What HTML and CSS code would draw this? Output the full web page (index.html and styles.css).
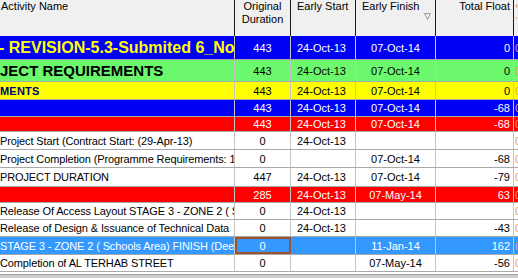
FILE: index.html
```html
<!DOCTYPE html>
<html>
<head>
<meta charset="utf-8">
<link rel="stylesheet" href="styles.css">
</head>
<body>
<div class="grid">
  <div class="row head">
    <div class="c c1">Activity Name</div>
    <div class="c c2">Original<br>Duration</div>
    <div class="c c3">Early Start</div>
    <div class="c c4"><span>Early Finish</span><svg class="sort" width="7" height="7" viewBox="0 0 7 7"><path d="M0.5 0.5 H6.5 L3.5 6.5 Z" fill="none" stroke="#9a9a9a" stroke-width="1"/></svg></div>
    <div class="c c5">Total Float</div>
    <div class="c c6"><svg width="4" height="36" viewBox="0 0 4 36"><rect x="1" y="0" width="2" height="4" fill="#e8a050"/><rect x="1" y="17" width="2" height="2" fill="#e8a050"/></svg></div>
  </div>

  <div class="row h24 blue">
    <div class="c c1"><span class="name t-wbs1">- REVISION-5.3-Submited 6_Nov</span></div>
    <div class="c c2">443</div>
    <div class="c c3">24-Oct-13</div>
    <div class="c c4">07-Oct-14</div>
    <div class="c c5">0</div>
    <div class="c c6">0</div>
  </div>

  <div class="row h22 green">
    <div class="c c1"><span class="name t-wbs2">JECT REQUIREMENTS</span></div>
    <div class="c c2">443</div>
    <div class="c c3">24-Oct-13</div>
    <div class="c c4">07-Oct-14</div>
    <div class="c c5">0</div>
    <div class="c c6">0</div>
  </div>

  <div class="row h18 yellow">
    <div class="c c1"><span class="name t-wbs3">MENTS</span></div>
    <div class="c c2">443</div>
    <div class="c c3">24-Oct-13</div>
    <div class="c c4">07-Oct-14</div>
    <div class="c c5">0</div>
    <div class="c c6">0</div>
  </div>

  <div class="row h17 blue">
    <div class="c c1"></div>
    <div class="c c2">443</div>
    <div class="c c3">24-Oct-13</div>
    <div class="c c4">07-Oct-14</div>
    <div class="c c5">-68</div>
    <div class="c c6">0</div>
  </div>

  <div class="row h15 red">
    <div class="c c1"></div>
    <div class="c c2">443</div>
    <div class="c c3">24-Oct-13</div>
    <div class="c c4">07-Oct-14</div>
    <div class="c c5">-68</div>
    <div class="c c6">0</div>
  </div>

  <div class="row h18">
    <div class="c c1"><span class="name">Project Start (Contract Start: (29-Apr-13)</span></div>
    <div class="c c2">0</div>
    <div class="c c3">24-Oct-13</div>
    <div class="c c4"></div>
    <div class="c c5"></div>
    <div class="c c6">0</div>
  </div>

  <div class="row h18">
    <div class="c c1"><span class="name">Project Completion (Programme Requirements: 17-Oct-14)</span></div>
    <div class="c c2">0</div>
    <div class="c c3"></div>
    <div class="c c4">07-Oct-14</div>
    <div class="c c5">-68</div>
    <div class="c c6">0</div>
  </div>

  <div class="row h19">
    <div class="c c1"><span class="name">PROJECT DURATION</span></div>
    <div class="c c2">447</div>
    <div class="c c3">24-Oct-13</div>
    <div class="c c4">07-Oct-14</div>
    <div class="c c5">-79</div>
    <div class="c c6">0</div>
  </div>

  <div class="row h16 red">
    <div class="c c1"></div>
    <div class="c c2">285</div>
    <div class="c c3">24-Oct-13</div>
    <div class="c c4">07-May-14</div>
    <div class="c c5">63</div>
    <div class="c c6">0</div>
  </div>

  <div class="row h17">
    <div class="c c1"><span class="name">Release Of Access Layout STAGE 3 - ZONE 2 ( Schools Area)</span></div>
    <div class="c c2">0</div>
    <div class="c c3">24-Oct-13</div>
    <div class="c c4"></div>
    <div class="c c5"></div>
    <div class="c c6">0</div>
  </div>

  <div class="row h17">
    <div class="c c1"><span class="name">Release of Design &amp; Issuance of Technical Data</span></div>
    <div class="c c2">0</div>
    <div class="c c3">24-Oct-13</div>
    <div class="c c4"></div>
    <div class="c c5">-43</div>
    <div class="c c6">0</div>
  </div>

  <div class="row h18 selected">
    <div class="c c1"><span class="name">STAGE 3 - ZONE 2 ( Schools Area) FINISH (Deep Excavation)</span></div>
    <div class="c c2 focus">0</div>
    <div class="c c3"></div>
    <div class="c c4">11-Jan-14</div>
    <div class="c c5">162</div>
    <div class="c c6">0</div>
  </div>

  <div class="row h17">
    <div class="c c1"><span class="name">Completion of AL TERHAB STREET</span></div>
    <div class="c c2">0</div>
    <div class="c c3"></div>
    <div class="c c4">07-May-14</div>
    <div class="c c5">-56</div>
    <div class="c c6">0</div>
  </div>

  <div class="footer"><div class="bar"></div></div>
</div>
</body>
</html>
```

FILE: styles.css
```css
html, body {
  margin: 0;
  padding: 0;
  background: #ffffff;
  overflow: hidden;
}

.grid {
  width: 518px;
  height: 278px;
  display: flex;
  flex-direction: column;
  font-family: "Liberation Sans", Arial, sans-serif;
  font-size: 11px;
  color: #000;
  overflow: hidden;
}

.row {
  display: grid;
  grid-template-columns: 235px 56px 65px 80px 78px 1fr;
  box-sizing: border-box;
  border-bottom: 1px solid #a9a9a9;
  flex: none;
}

.c {
  box-sizing: border-box;
  border-right: 1px solid #c4c4c4;
  overflow: hidden;
  white-space: nowrap;
  display: flex;
  align-items: center;
  min-width: 0;
}

.name {
  display: block;
  min-width: 0;
  flex: 1 1 auto;
  overflow: hidden;
  white-space: nowrap;
  text-overflow: clip;
  letter-spacing: -0.12px;
}

.c6 {
  border-right: none;
  padding-left: 1px;
  color: #e8a050;
}

.c1 { padding-left: 0; }
.c2 { justify-content: center; }
.c3 { padding-left: 6px; }
.c4 { justify-content: center; }
.c5 { justify-content: flex-end; padding-right: 3px; }

/* header */
.head {
  height: 36px;
  background: #f0f0f0;
  border-bottom: none;
  line-height: 13px;
}
.head .c {
  align-items: flex-start;
  border-right: 1px solid #1a1a1a;
}
.head .c6 { border-right: none; }
.head .c1 { padding-left: 1px; }
.head .c2 { text-align: center; }
.head .c4 {
  justify-content: space-between;
  padding-left: 6px;
  padding-right: 4px;
}
.head .sort { margin-top: 13px; }

/* row heights */
.h24 { height: 24px; }
.h22 { height: 22px; }
.h19 { height: 19px; }
.h18 { height: 18px; }
.h17 { height: 17px; }
.h16 { height: 16px; }
.h15 { height: 15px; }

/* row colours */
.blue { background: #0000f4; color: #ffffff; }
.red { background: #ff0000; color: #ffffff; }
.green { background: #6cf86c; color: #000000; }
.yellow { background: #ffff00; color: #000000; }
.selected { background: #3399ff; color: #ffffff; }

.t-wbs1 {
  color: #ffff00;
  font-weight: bold;
  font-size: 16px;
  letter-spacing: 0;
  margin-left: -1px;
}
.t-wbs2 {
  font-weight: bold;
  font-size: 15px;
  letter-spacing: 0;
}
.t-wbs3 {
  color: #00007a;
  font-weight: bold;
  font-size: 11px;
  letter-spacing: 0.2px;
}

.focus {
  outline: 2px solid #a0522d;
  outline-offset: -2px;
}

.footer {
  flex: none;
  height: 6px;
  box-sizing: border-box;
  padding-top: 2px;
  background: #ffffff;
}
.footer .bar {
  height: 4px;
  background: #cfcfcf;
  border-top: 1px solid #a0a0a0;
}
```
